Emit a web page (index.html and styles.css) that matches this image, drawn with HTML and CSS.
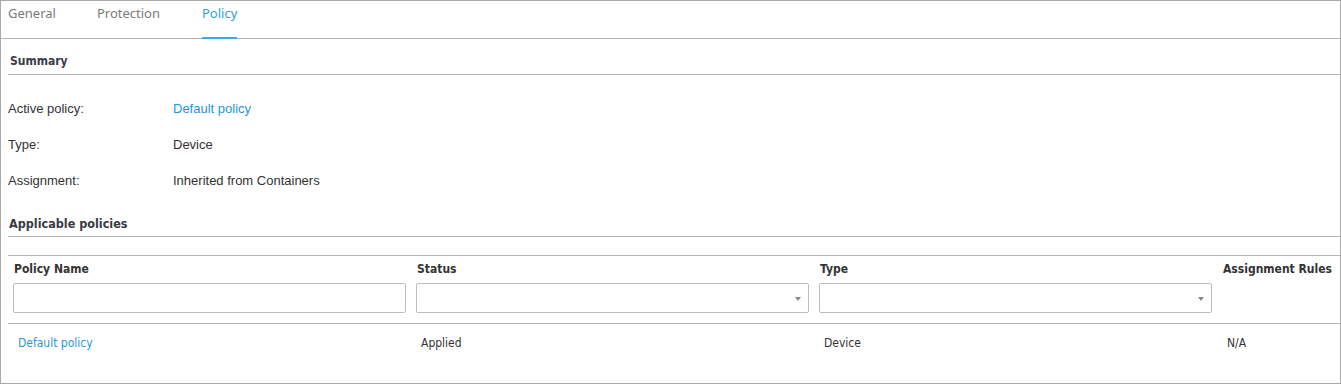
FILE: index.html
```html
<!DOCTYPE html>
<html lang="en">
<head>
  <meta charset="UTF-8">
  <title>Policy</title>
  <link rel="stylesheet" href="styles.css">
</head>
<body>

  <div class="panel">
    <div class="tabs">
      <div class="tab">General</div>
      <div class="tab">Protection</div>
      <div class="tab active">Policy</div>
    </div>

    <div class="section">
      <div class="section-title">Summary</div>
      <div class="info">
        <div class="info-row"><span class="label">Active policy:</span><a class="link" href="#">Default policy</a></div>
        <div class="info-row"><span class="label">Type:</span><span>Device</span></div>
        <div class="info-row"><span class="label">Assignment:</span><span>Inherited from Containers</span></div>
      </div>
    </div>

    <div class="section">
      <div class="section-title applicable">Applicable policies</div>
      <div class="grid">
        <div class="grid-head">
          <div class="col">
            <div class="col-title">Policy Name</div>
            <div class="field"></div>
          </div>
          <div class="col">
            <div class="col-title">Status</div>
            <div class="field select"><span class="caret"></span></div>
          </div>
          <div class="col">
            <div class="col-title">Type</div>
            <div class="field select"><span class="caret"></span></div>
          </div>
          <div class="col">
            <div class="col-title">Assignment Rules</div>
          </div>
        </div>
        <div class="grid-row">
          <a class="link cell" href="#">Default policy</a>
          <span class="cell">Applied</span>
          <span class="cell">Device</span>
          <span class="cell">N/A</span>
        </div>
      </div>
    </div>
  </div>

</body>
</html>
```

FILE: styles.css
```css
* {
  box-sizing: border-box;
}

body {
  margin: 0;
  background-color: #fff;
  font-family: "Liberation Sans", Arial, sans-serif;
  font-size: 13px;
  color: #333;
}

.panel {
  width: 1341px;
  height: 384px;
  border: 1px solid #a9a9a9;
  overflow: hidden;
}

.tabs {
  display: flex;
  height: 38px;
  padding-left: 7px;
  border-bottom: 1px solid #b5b5b5;
}

.tab {
  font-family: "Noto Sans", "Open Sans", sans-serif;
  font-size: 13px;
  color: #7a7a7a;
  margin-right: 41px;
  padding-top: 3px;
  height: 37px;
}

.tab.active {
  color: #2a9fe0;
  border-bottom: 2px solid #3aa8ea;
  height: 38px;
  margin-bottom: -1px;
  margin-left: 1px;
}

.section {
  padding-left: 7px;
}

.section-title {
  font-family: "DejaVu Sans Condensed", "DejaVu Sans", sans-serif;
  font-weight: bold;
  font-size: 12px;
  color: #3a3a44;
  height: 36px;
  padding: 15px 0 0 2px;
  border-bottom: 1px solid #b5b5b5;
}

.section-title.applicable {
  padding-left: 1px;
  font-size: 12.5px;
}

.info {
  padding-top: 16px;
  padding-bottom: 2px;
}

.info-row {
  display: flex;
  height: 36px;
  line-height: 36px;
}

.label {
  width: 165px;
}

.link {
  color: #2597dc;
  text-decoration: none;
}

.grid {
  margin-top: 18px;
  border-top: 1px solid #b5b5b5;
  font-family: "DejaVu Sans Condensed", "DejaVu Sans", sans-serif;
  font-size: 12px;
}

.grid-head {
  display: grid;
  grid-template-columns: 393px 393px 393px auto;
  column-gap: 10px;
  padding: 6px 0 10px 5px;
  border-bottom: 1px solid #b5b5b5;
}

.col-title {
  font-weight: bold;
  color: #333;
  height: 21px;
  line-height: 15px;
  padding-left: 1px;
}

.field {
  position: relative;
  height: 30px;
  border: 1px solid #bdbdbd;
  border-radius: 2px;
}

.caret {
  position: absolute;
  right: 7px;
  top: 13px;
  border-left: 3px solid transparent;
  border-right: 3px solid transparent;
  border-top: 4px solid #888;
}

.grid-row {
  display: grid;
  grid-template-columns: 393px 393px 393px auto;
  column-gap: 10px;
  padding: 11px 0 0 10px;
  height: 40px;
}

.cell {
  line-height: 16px;
}
```
